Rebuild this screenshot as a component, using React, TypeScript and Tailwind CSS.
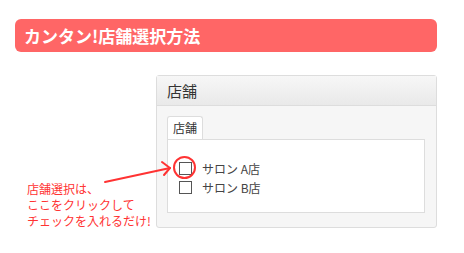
export default function App() {
  return (
    <div className="relative w-[464px] h-[253px] bg-white" style={{ fontFamily: '"Noto Sans CJK JP", "Noto Sans", sans-serif' }}>
      <div className="pt-[19px] pl-[15px]">
        <div className="w-[422px] h-[33px] rounded-[6px] bg-[#ff6666] flex items-center pl-[9px]">
          <span className="text-white font-bold text-[17px] leading-none">カンタン!店舗選択方法</span>
        </div>

        <div className="ml-[141px] mt-[23px] w-[281px] h-[153px] border border-[#dddddd] rounded-[3px] bg-[#f6f6f6]">
          <div className="h-[30px] border-b border-[#dddddd] bg-gradient-to-b from-[#f7f7f7] to-[#e9e9e9] flex items-center pl-[10px]">
            <span className="text-[15px] text-[#333333] leading-none">店舗</span>
          </div>
          <div className="pl-[10px] pt-[10px]">
            <div className="w-[36px] h-[23px] border border-b-0 border-[#dddddd] rounded-t-[3px] bg-white flex items-center justify-center">
              <span className="text-[12px] text-[#333333] leading-none">店舗</span>
            </div>
            <div className="w-[258px] h-[74px] border border-[#dddddd] bg-white pl-[11px] pt-[22px] flex flex-col gap-[6px]">
              {['サロン A店', 'サロン B店'].map((label) => (
                <div key={label} className="flex items-center h-[13px]">
                  <div className="w-[13px] h-[13px] border border-[#555555] bg-white" />
                  <span className="ml-[10px] text-[12px] text-[#444444] leading-none">{label}</span>
                </div>
              ))}
            </div>
          </div>
        </div>
      </div>

      <div className="absolute left-[173px] top-[156px] w-[23px] h-[23px] rounded-full border-2 border-[#ff3333]" />

      <svg className="absolute left-0 top-0" width="464" height="253">
        <line x1="105" y1="182" x2="170" y2="168" stroke="#ff3333" strokeWidth="2" strokeLinecap="round" />
        <polyline points="162,162 170,168 164,175" fill="none" stroke="#ff3333" strokeWidth="2" strokeLinecap="round" strokeLinejoin="round" />
      </svg>

      <div className="absolute left-[27px] top-[181px] text-[12px] leading-[16px] text-[#ff3333]">
        <div>店舗選択は、</div>
        <div>ここをクリックして</div>
        <div>チェックを入れるだけ!</div>
      </div>
    </div>
  );
}
